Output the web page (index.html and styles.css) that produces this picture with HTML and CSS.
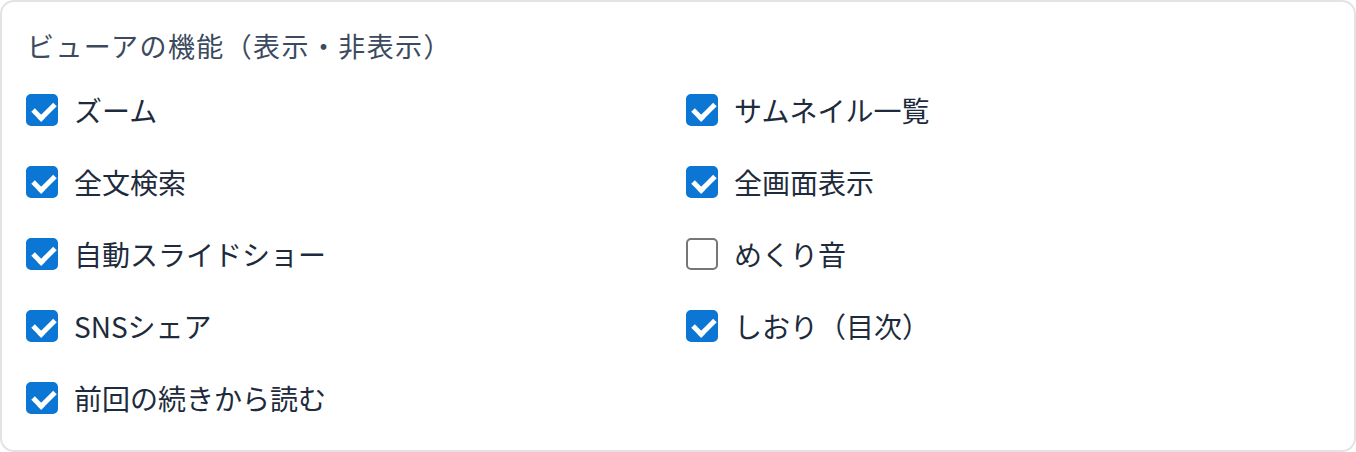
FILE: index.html
```html
<!DOCTYPE html>
<html lang="ja">
<head>
<meta charset="utf-8">
<title>ビューアの機能</title>
<link rel="stylesheet" href="styles.css">
</head>
<body>
<section class="panel">
  <h2 class="panel-title">ビューアの機能（表示・非表示）</h2>
  <div class="options">
    <label class="option"><input type="checkbox" checked><span class="box"></span><span class="text">ズーム</span></label>
    <label class="option"><input type="checkbox" checked><span class="box"></span><span class="text">サムネイル一覧</span></label>
    <label class="option"><input type="checkbox" checked><span class="box"></span><span class="text">全文検索</span></label>
    <label class="option"><input type="checkbox" checked><span class="box"></span><span class="text">全画面表示</span></label>
    <label class="option"><input type="checkbox" checked><span class="box"></span><span class="text">自動スライドショー</span></label>
    <label class="option"><input type="checkbox"><span class="box"></span><span class="text">めくり音</span></label>
    <label class="option"><input type="checkbox" checked><span class="box"></span><span class="text">SNSシェア</span></label>
    <label class="option"><input type="checkbox" checked><span class="box"></span><span class="text">しおり（目次）</span></label>
    <label class="option"><input type="checkbox" checked><span class="box"></span><span class="text">前回の続きから読む</span></label>
  </div>
</section>
</body>
</html>
```
FILE: styles.css
```css
* { box-sizing: border-box; }

html, body {
  margin: 0;
  background: #ffffff;
}

body {
  font-family: "Noto Sans CJK JP", "Noto Sans", sans-serif;
  width: 1356px;
  height: 452px;
}

.panel {
  width: 1356px;
  height: 452px;
  border: 2px solid #e3e3e3;
  border-radius: 14px;
  padding: 24px 24px 0 24px;
  background: #fff;
}

.panel-title {
  margin: 0;
  font-size: 27px;
  font-weight: 400;
  line-height: 40px;
  color: #3b4a5e;
  letter-spacing: 1.4px;
  padding-left: 1px;
}

.options {
  display: grid;
  grid-template-columns: 1fr 1fr;
  column-gap: 16px;
  row-gap: 32px;
  margin-top: 24px;
}

.option {
  display: flex;
  align-items: center;
  gap: 16px;
  height: 40px;
  cursor: pointer;
}

.option input {
  display: none;
}

.box {
  width: 32px;
  height: 32px;
  border-radius: 5px;
  border: 2px solid #767676;
  background: #fff;
  flex: none;
  position: relative;
}

.option input:checked + .box {
  border-color: #0b76d4;
  background: #0b76d4;
}

.option input:checked + .box::after {
  content: "";
  position: absolute;
  left: 9px;
  top: 2px;
  width: 9px;
  height: 17px;
  border-right: 5px solid #fff;
  border-bottom: 5px solid #fff;
  transform: rotate(45deg);
}

.text {
  font-size: 28px;
  color: #1e2b3c;
  line-height: 40px;
}
```
